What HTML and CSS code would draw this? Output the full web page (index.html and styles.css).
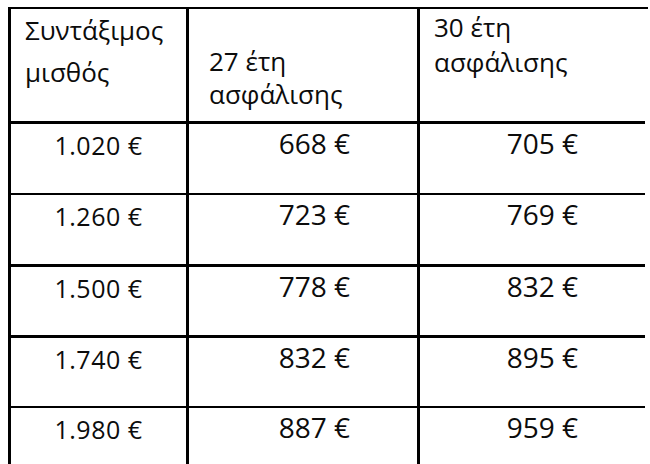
FILE: index.html
```html
<!DOCTYPE html>
<html lang="el">
<head>
<meta charset="utf-8">
<title>Σύνταξη</title>
<link rel="stylesheet" href="styles.css">
</head>
<body>
<div class="page">
  <div class="grid">
    <div class="cell head h1"><span class="t">Συντάξιμος<br>μισθός</span></div>
    <div class="cell head h2"><span class="t">27 έτη<br>ασφάλισης</span></div>
    <div class="cell head h3 last"><span class="t">30 έτη<br>ασφάλισης</span></div>

    <div class="cell c1 r1"><span class="t">1.020 €</span></div>
    <div class="cell c2 r1"><span class="t">668 €</span></div>
    <div class="cell c3 r1 last"><span class="t">705 €</span></div>

    <div class="cell c1 r2"><span class="t">1.260 €</span></div>
    <div class="cell c2 r2"><span class="t">723 €</span></div>
    <div class="cell c3 r2 last"><span class="t">769 €</span></div>

    <div class="cell c1 r3"><span class="t">1.500 €</span></div>
    <div class="cell c2 r3"><span class="t">778 €</span></div>
    <div class="cell c3 r3 last"><span class="t">832 €</span></div>

    <div class="cell c1 r4"><span class="t">1.740 €</span></div>
    <div class="cell c2 r4"><span class="t">832 €</span></div>
    <div class="cell c3 r4 last"><span class="t">895 €</span></div>

    <div class="cell c1 r5"><span class="t">1.980 €</span></div>
    <div class="cell c2 r5"><span class="t">887 €</span></div>
    <div class="cell c3 r5 last"><span class="t">959 €</span></div>
  </div>
</div>
</body>
</html>
```
FILE: styles.css
```css
html, body {
  margin: 0;
  padding: 0;
  background: #ffffff;
  overflow: hidden;
}
.page {
  width: 650px;
  height: 464px;
  padding: 7px 0 0 8px;
  box-sizing: border-box;
  overflow: hidden;
  font-family: "Open Sans", "Noto Sans", sans-serif;
  font-weight: 500;
  color: #0c0c0c;
}
.grid {
  display: grid;
  width: 637px;
  grid-template-columns: 178px 231px 225px;
  grid-template-rows: 115px 71px 72px 71px 70px 71px;
  border-top: 2px solid #000;
  border-left: 3px solid #000;
}
.cell {
  box-sizing: border-box;
  border-right: 3px solid #000;
  border-bottom: 3px solid #000;
}
.cell.last {
  border-right: none;
}
.r1, .r4, .r5 { border-bottom-width: 2px; }

.t {
  display: inline-block;
}

.head {
  font-size: 26px;
}
.h1 {
  padding: 0 0 0 14px;
  line-height: 42px;
}
.h2 {
  padding: 36px 0 0 20px;
  line-height: 33px;
}
.h3 {
  padding: 1px 0 0 14px;
  line-height: 35px;
}

.c1 {
  text-align: center;
  font-size: 25px;
  letter-spacing: 0.5px;
  line-height: 26px;
  padding-top: 8px;
}
.c2, .c3 {
  text-align: right;
  font-size: 28px;
  line-height: 36px;
  padding: 1px 67px 0 0;
}
```
